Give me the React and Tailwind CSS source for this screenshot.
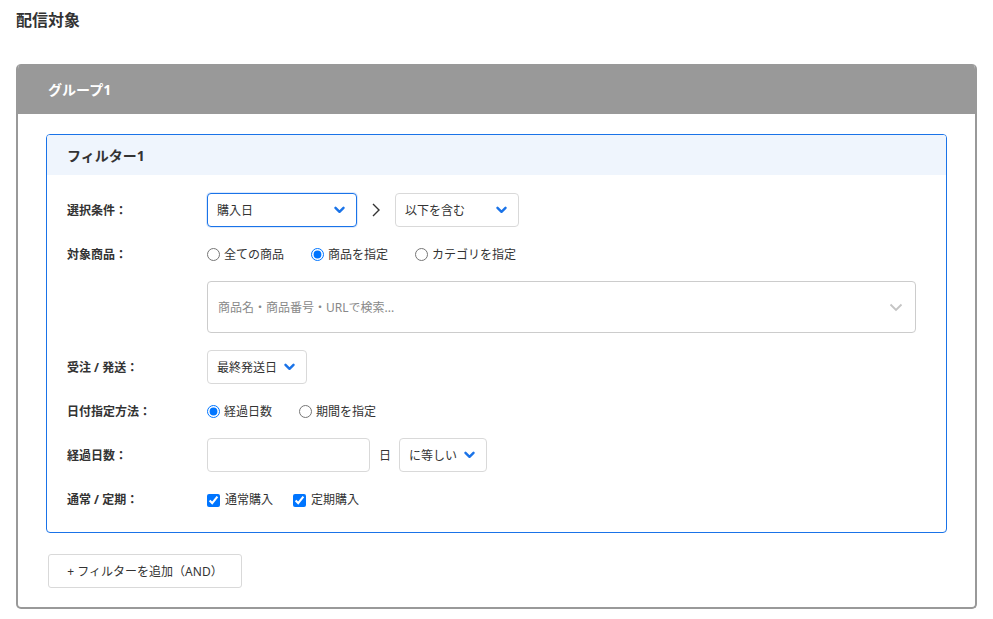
import { useState } from 'react'

const FONT = { fontFamily: '"Noto Sans", "Noto Sans CJK JP", sans-serif' }

function Chevron({ className = '' }) {
  return (
    <svg width="11" height="8" viewBox="0 0 11 8" className={className}>
      <path d="M1.5 1.8 L5.5 5.8 L9.5 1.8" fill="none" stroke="currentColor" strokeWidth="2.4" strokeLinecap="round" strokeLinejoin="round" />
    </svg>
  )
}

function SelectBox({ value, width, focused }) {
  return (
    <div
      className={`flex h-[34px] items-center justify-between rounded-[4px] border bg-white pl-[9px] pr-[11px] text-[12px] text-[#333] ${
        focused ? 'border-[#1a73e8] shadow-[0_0_0_1px_rgba(26,115,232,0.15)]' : 'border-[#d9d9d9]'
      } ${width}`}
    >
      <span className="pt-px">{value}</span>
      <Chevron className="text-[#1a73e8]" />
    </div>
  )
}

function Row({ label, children }) {
  return (
    <div className="flex items-center">
      <div className="w-[140px] shrink-0 pt-px text-[12px] font-bold text-[#333]">{label}</div>
      <div className="flex items-center">{children}</div>
    </div>
  )
}

function Radio({ name, label, checked, onChange }) {
  return (
    <label className="flex h-5 items-center gap-[4px] pt-px text-[12px] text-[#333]">
      <input type="radio" name={name} checked={checked} onChange={onChange} className="m-0 h-[13px] w-[13px]" />
      <span>{label}</span>
    </label>
  )
}

function Check({ label, checked, onChange }) {
  return (
    <label className="flex h-5 items-center gap-[5px] pt-[2px] text-[12px] text-[#333]">
      <input type="checkbox" checked={checked} onChange={onChange} className="m-0 h-[13px] w-[13px]" />
      <span>{label}</span>
    </label>
  )
}

export default function App() {
  const [target, setTarget] = useState('product')
  const [dateMode, setDateMode] = useState('elapsed')
  const [normal, setNormal] = useState(true)
  const [regular, setRegular] = useState(true)

  return (
    <div className="min-h-screen bg-white px-4 pt-[10px] pb-4 text-[#333]" style={FONT}>
      <h1 className="mb-[34px] text-[16px] font-bold leading-5">配信対象</h1>

      {/* Group */}
      <div className="overflow-hidden rounded-[5px] border-2 border-t-0 border-[#999]">
        <div className="flex h-[50px] items-center bg-[#999] px-[30px] text-[14px] font-bold text-white">グループ1</div>

        <div className="px-[28px] pt-5 pb-[19px]">
          {/* Filter */}
          <div className="overflow-hidden rounded-[4px] border border-[#1a73e8]">
            <div className="flex h-10 items-center bg-[#eff5fd] px-5 text-[14px] font-bold">フィルター1</div>

            <div className="flex flex-col gap-[17px] px-5 pt-[18px] pb-[23px]">
              <Row label="選択条件：">
                <SelectBox value="購入日" width="w-[150px]" focused />
                <svg width="12" height="16" viewBox="0 0 12 16" className="mx-[13px] text-[#333]">
                  <path d="M3 2 L9 8 L3 14" fill="none" stroke="currentColor" strokeWidth="1.4" />
                </svg>
                <SelectBox value="以下を含む" width="w-[124px]" />
              </Row>

              <Row label="対象商品：">
                <div className="flex items-center gap-[27px]">
                  <Radio name="target" label="全ての商品" checked={target === 'all'} onChange={() => setTarget('all')} />
                  <Radio name="target" label="商品を指定" checked={target === 'product'} onChange={() => setTarget('product')} />
                  <Radio name="target" label="カテゴリを指定" checked={target === 'category'} onChange={() => setTarget('category')} />
                </div>
              </Row>

              <div className="pl-[140px] pr-[10px]">
                <div className="flex h-[52px] items-center justify-between rounded-[4px] border border-[#ccc] pl-[10px] pr-[12px]">
                  <span className="pt-px text-[12px] text-[#888]">商品名・商品番号・URLで検索...</span>
                  <svg width="14" height="9" viewBox="0 0 14 9" className="text-[#c4c4c4]">
                    <path d="M1.5 1.5 L7 7 L12.5 1.5" fill="none" stroke="currentColor" strokeWidth="1.8" />
                  </svg>
                </div>
              </div>

              <Row label="受注 / 発送：">
                <SelectBox value="最終発送日" width="w-[100px]" />
              </Row>

              <Row label="日付指定方法：">
                <div className="flex items-center gap-[27px]">
                  <Radio name="date" label="経過日数" checked={dateMode === 'elapsed'} onChange={() => setDateMode('elapsed')} />
                  <Radio name="date" label="期間を指定" checked={dateMode === 'range'} onChange={() => setDateMode('range')} />
                </div>
              </Row>

              <Row label="経過日数：">
                <input className="h-[34px] w-[163px] rounded-[4px] border border-[#d9d9d9] px-2 text-[12px] outline-none" />
                <span className="ml-[9px] mr-[8px] pt-px text-[12px]">日</span>
                <SelectBox value="に等しい" width="w-[88px]" />
              </Row>

              <Row label="通常 / 定期：">
                <div className="flex items-center gap-[20px]">
                  <Check label="通常購入" checked={normal} onChange={() => setNormal(!normal)} />
                  <Check label="定期購入" checked={regular} onChange={() => setRegular(!regular)} />
                </div>
              </Row>
            </div>
          </div>

          <button className="ml-[2px] mt-[21px] flex h-[34px] w-[194px] items-center justify-center rounded-[3px] border border-[#d9d9d9] bg-white pt-px text-[12px] text-[#333]">
            + フィルターを追加（AND）
          </button>
        </div>
      </div>
    </div>
  )
}
